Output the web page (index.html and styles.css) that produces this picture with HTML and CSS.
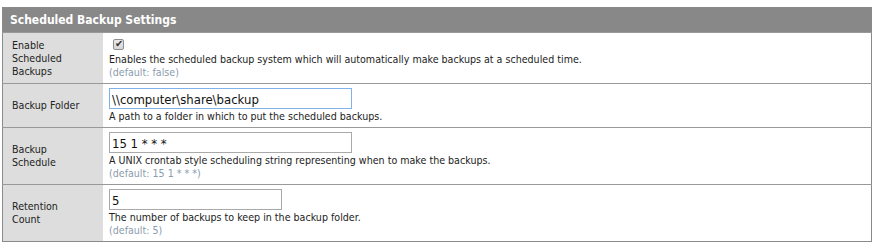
FILE: index.html
```html
<!DOCTYPE html>
<html>
  <head>
    <link rel="stylesheet" href="styles.css">
  </head>
  <body>
    <table class="settings">
      <thead>
        <tr>
          <th colspan="2">Scheduled Backup Settings</th>
        </tr>
      </thead>
      <tbody>
        <tr>
          <td class="name">Enable Scheduled Backups</td>
          <td class="value">
            <input type="checkbox" class="check" checked />
            <div class="desc">Enables the scheduled backup system which will automatically make backups at a scheduled time.</div>
            <div class="default">(default: false)</div>
          </td>
        </tr>
        <tr>
          <td class="name">Backup Folder</td>
          <td class="value">
            <input type="text" class="text wide focus" value="\\computer\share\backup" />
            <div class="desc">A path to a folder in which to put the scheduled backups.</div>
          </td>
        </tr>
        <tr>
          <td class="name">Backup Schedule</td>
          <td class="value">
            <input type="text" class="text wide" value="15 1 * * *" />
            <div class="desc">A UNIX crontab style scheduling string representing when to make the backups.</div>
            <div class="default">(default: 15 1 * * *)</div>
          </td>
        </tr>
        <tr>
          <td class="name">Retention Count</td>
          <td class="value">
            <input type="text" class="text short" value="5" />
            <div class="desc">The number of backups to keep in the backup folder.</div>
            <div class="default">(default: 5)</div>
          </td>
        </tr>
      </tbody>
    </table>
  </body>
</html>
```

FILE: styles.css
```css
body {
  margin: 7px 6px 0 2px;
  background: #fff;
  font-family: "DejaVu Sans Condensed", "DejaVu Sans", sans-serif;
  font-size: 10.6px;
  color: #222;
}

.settings {
  width: 870px;
  border-collapse: collapse;
  border: 1px solid #8a8a8a;
}

.settings th {
  background-color: #888;
  color: #fff;
  text-align: left;
  font-size: 12px;
  font-weight: bold;
  height: 24px;
  padding: 0 7px;
}

.settings td {
  border-top: 1px solid #999;
  line-height: 13px;
}

.name {
  width: 76px;
  background-color: #ddd;
  padding: 0 15px 0 9px;
  vertical-align: middle;
}

.value {
  padding: 4px 6px 4px 6px;
  vertical-align: top;
}

.check {
  appearance: none;
  display: block;
  position: relative;
  width: 11px;
  height: 11px;
  margin: 2px 0 3px 4px;
  border: 1px solid #8e8f8f;
  border-radius: 2px;
  background: linear-gradient(#eaeaea, #d6d6d6);
}

.check::before {
  content: "\2714";
  position: absolute;
  left: 1px;
  top: -2px;
  font-size: 10px;
  color: #333;
}

.text {
  display: block;
  box-sizing: border-box;
  height: 21px;
  margin: 0;
  padding: 1px 2px 0;
  border: 1px solid #a9a9a9;
  font-family: "DejaVu Sans Condensed", "DejaVu Sans", sans-serif;
  font-size: 13px;
  color: #111;
  outline: none;
}

.wide {
  width: 243px;
}

.short {
  width: 173px;
}

.focus {
  border-color: #7eb4ea;
}

.desc {
  margin-top: 1px;
}

.default {
  color: #8a9cae;
}
```
